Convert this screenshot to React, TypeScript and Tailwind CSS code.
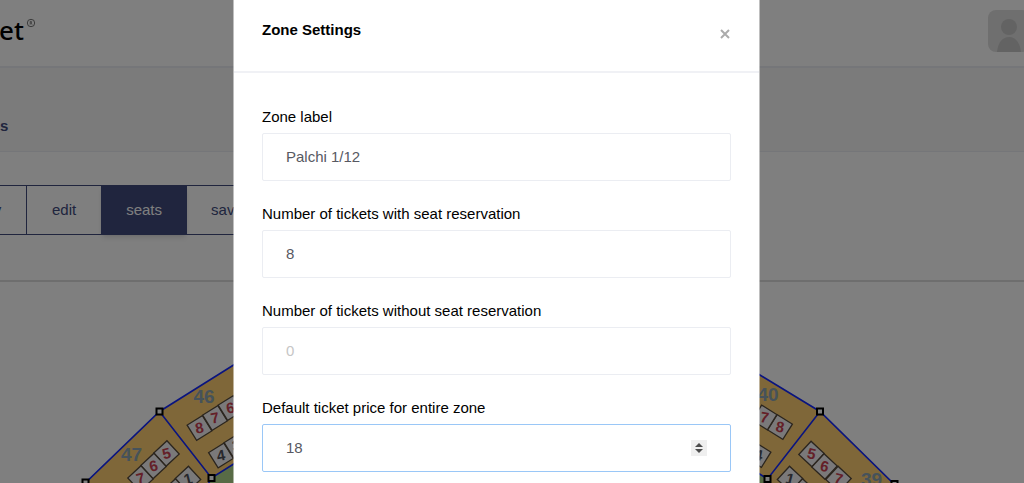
import React from "react";

type Cell = { x: number; y: number; angle: number; label: string; dark?: boolean };

const cells: Cell[] = [
  { x: 199.5, y: 428, angle: -32, label: "8" },
  { x: 215, y: 418, angle: -32, label: "7" },
  { x: 230.5, y: 408, angle: -32, label: "6" },
  { x: 221, y: 455.5, angle: -32, label: "4", dark: true },
  { x: 236.5, y: 445.5, angle: -32, label: "3", dark: true },
  { x: 166.5, y: 453.5, angle: -43, label: "5" },
  { x: 153.5, y: 466, angle: -43, label: "6" },
  { x: 140.5, y: 478.5, angle: -43, label: "7" },
  { x: 188, y: 479, angle: -43, label: "1", dark: true },
  { x: 175, y: 491.5, angle: -43, label: "2", dark: true },
  { x: 780, y: 427, angle: 32, label: "8" },
  { x: 764.5, y: 417.5, angle: 32, label: "7" },
  { x: 758.5, y: 455, angle: 32, label: "4", dark: true },
  { x: 811.5, y: 454, angle: 43, label: "5" },
  { x: 824.5, y: 466.5, angle: 43, label: "6" },
  { x: 838.5, y: 479, angle: 43, label: "7" },
  { x: 790, y: 479, angle: 43, label: "1", dark: true },
  { x: 803, y: 491.5, angle: 43, label: "2", dark: true },
];

const zoneLabels = [
  { x: 204, y: 402.5, label: "46" },
  { x: 131.5, y: 461, label: "47" },
  { x: 768, y: 400.5, label: "40" },
  { x: 871.5, y: 486, label: "39" },
];

const handles = [
  [159.5, 411.5],
  [85.5, 482.5],
  [211.5, 478],
  [820, 411.5],
  [767.5, 479],
  [894.5, 484],
];

const SeatMap = () => {
  return (
    <svg
      viewBox="0 282 1024 201"
      className="block w-full"
      fontFamily="Liberation Sans, Arial, sans-serif"
      fontWeight="bold"
      textAnchor="middle"
    >
      <g fill="#ffcf73">
        <path d="M159.5 411.5 L240 361 V490 H78 L85.5 482.5 Z" />
        <path d="M820 411.5 L750 369 V490 H900 L894.5 484 Z" />
      </g>
      <g fill="#b0d68c">
        <path d="M211.5 478 L240 460 V490 H205 Z" />
        <path d="M767.5 479 L750 468 V490 H774 Z" />
      </g>
      <g fill="none" stroke="#1428ff" strokeWidth="1.6">
        <path d="M78 490 L159.5 411.5 L240 361" />
        <path d="M159.5 411.5 L211.5 478 L240 460" />
        <path d="M211.5 478 L205 490" />
        <path d="M750 369 L820 411.5 L900 490" />
        <path d="M820 411.5 L767.5 479 L750 468" />
      </g>
      {cells.map((c, i) => (
        <g key={i} transform={`translate(${c.x} ${c.y}) rotate(${c.angle})`}>
          <rect x="-9" y="-9" width="18" height="18" fill="#f4f2f4" stroke="#564a3c" strokeWidth="1.3" />
          <text
            y="5"
            fontSize="15"
            fill={c.dark ? "#505058" : "#c84050"}
            transform={`rotate(${-c.angle / 1.5})`}
          >
            {c.label}
          </text>
        </g>
      ))}
      {zoneLabels.map((z) => (
        <text key={z.label} x={z.x} y={z.y} fontSize="19" fill="#8ca5b4">
          {z.label}
        </text>
      ))}
      {handles.map(([x, y]) => (
        <rect key={x} x={x - 3} y={y - 3} width="6" height="6" fill="#fff" stroke="#000" strokeWidth="2" />
      ))}
    </svg>
  );
};

const Field = ({
  id,
  label,
  value,
  placeholder,
  active,
}: {
  id: string;
  label: string;
  value?: string;
  placeholder?: string;
  active?: boolean;
}) => {
  return (
    <div>
      <label htmlFor={id} className="block h-6 leading-4 text-black">
        {label}
      </label>
      <div
        className={
          active
            ? "flex h-12 items-center rounded-xs border border-[#9ac7f7] px-[23px]"
            : "flex h-12 items-center rounded-xs border border-[#ebedf2] px-[23px]"
        }
      >
        <input
          id={id}
          type="text"
          defaultValue={value}
          placeholder={placeholder}
          className="min-w-0 flex-1 bg-transparent text-[#575962] outline-none placeholder:text-[#c6c6c6]"
        />
        {active && (
          <button type="button" aria-label="Change price" className="h-4 w-4 bg-[#efefef]">
            <svg viewBox="0 0 16 16" className="h-4 w-4" fill="#4d4d4d">
              <path d="M8 3 L12 7 H4 Z M8 13 L4 9 H12 Z" />
            </svg>
          </button>
        )}
      </div>
    </div>
  );
};

const App = () => {
  return (
    <div className="overflow-x-hidden bg-white font-['Liberation_Sans',Arial,sans-serif] text-[15px]">
      <header className="flex h-[68px] items-start justify-between overflow-hidden border-b-2 border-[#ebedf2]">
        <a href="#" className="flex items-start pt-3">
          <span className="-ml-px font-['Noto_Sans',sans-serif] text-[26px] leading-9 font-medium text-black">
            et
          </span>
          <svg viewBox="0 0 10 10" className="mt-1.5 ml-0.5 h-2.5 w-2.5" fill="none" stroke="#555" strokeWidth="0.8">
            <circle cx="5" cy="5" r="3.7" />
            <path d="M4.2 6.6 V3.4 H5.4 V5 H4.2 M5.2 5 L6 6.6" strokeWidth="0.6" />
          </svg>
        </a>
        <svg viewBox="0 0 42 42" className="mt-2.5 -mr-1.5 h-[42px] w-[42px] rounded-lg bg-[#dedede]" fill="#c6c6c6">
          <circle cx="21" cy="17" r="8" />
          <path d="M9 42 C10 32 15 27 21 27 C27 27 32 32 33 42 Z" />
        </svg>
      </header>

      <nav className="h-[84px] border-b border-[#ebedf2] bg-[#f7f7f7] pt-12">
        <a href="#" className="block leading-5 font-bold text-[#404a7c]">
          s
        </a>
      </nav>

      <div className="h-[130px] border-b-2 border-[#dcdcdc] pt-[33px]">
        <div className="-ml-8 flex h-[50px] text-[#404a7c]">
          <button className="w-[59px] border border-[#404a7c] px-6">y</button>
          <button className="border-y border-[#404a7c] px-[25px]">edit</button>
          <button className="border border-[#404a7c] bg-[#404a7c] px-6 text-white shadow-md">seats</button>
          <button className="border-y border-r border-[#404a7c] px-6">save</button>
        </div>
      </div>

      <SeatMap />

      <div className="fixed inset-0 flex justify-center overflow-hidden bg-black/50 pr-[31px]">
        <div
          role="dialog"
          aria-labelledby="zone-title"
          className="min-h-full w-full max-w-[527px] border-x border-white/50 bg-white bg-clip-padding"
        >
          <div className="flex h-[73px] items-start justify-between border-b-2 border-[#f0f1f5] px-7 pt-5">
            <h5 id="zone-title" className="leading-5 font-bold text-black">
              Zone Settings
            </h5>
            <button type="button" aria-label="Close" className="mt-2 flex h-3 w-3 items-center justify-center">
              <svg viewBox="0 0 12 12" className="h-3 w-3" stroke="#ababab" strokeWidth="2">
                <path d="M2 2 L10 10 M10 2 L2 10" />
              </svg>
            </button>
          </div>
          <form className="flex flex-col gap-[25px] px-7 pt-9">
            <Field id="zone-label" label="Zone label" value="Palchi 1/12" />
            <Field id="with-seat" label="Number of tickets with seat reservation" value="8" />
            <Field id="without-seat" label="Number of tickets without seat reservation" placeholder="0" />
            <Field id="price" label="Default ticket price for entire zone" value="18" active />
          </form>
        </div>
      </div>
    </div>
  );
};

export default App;
